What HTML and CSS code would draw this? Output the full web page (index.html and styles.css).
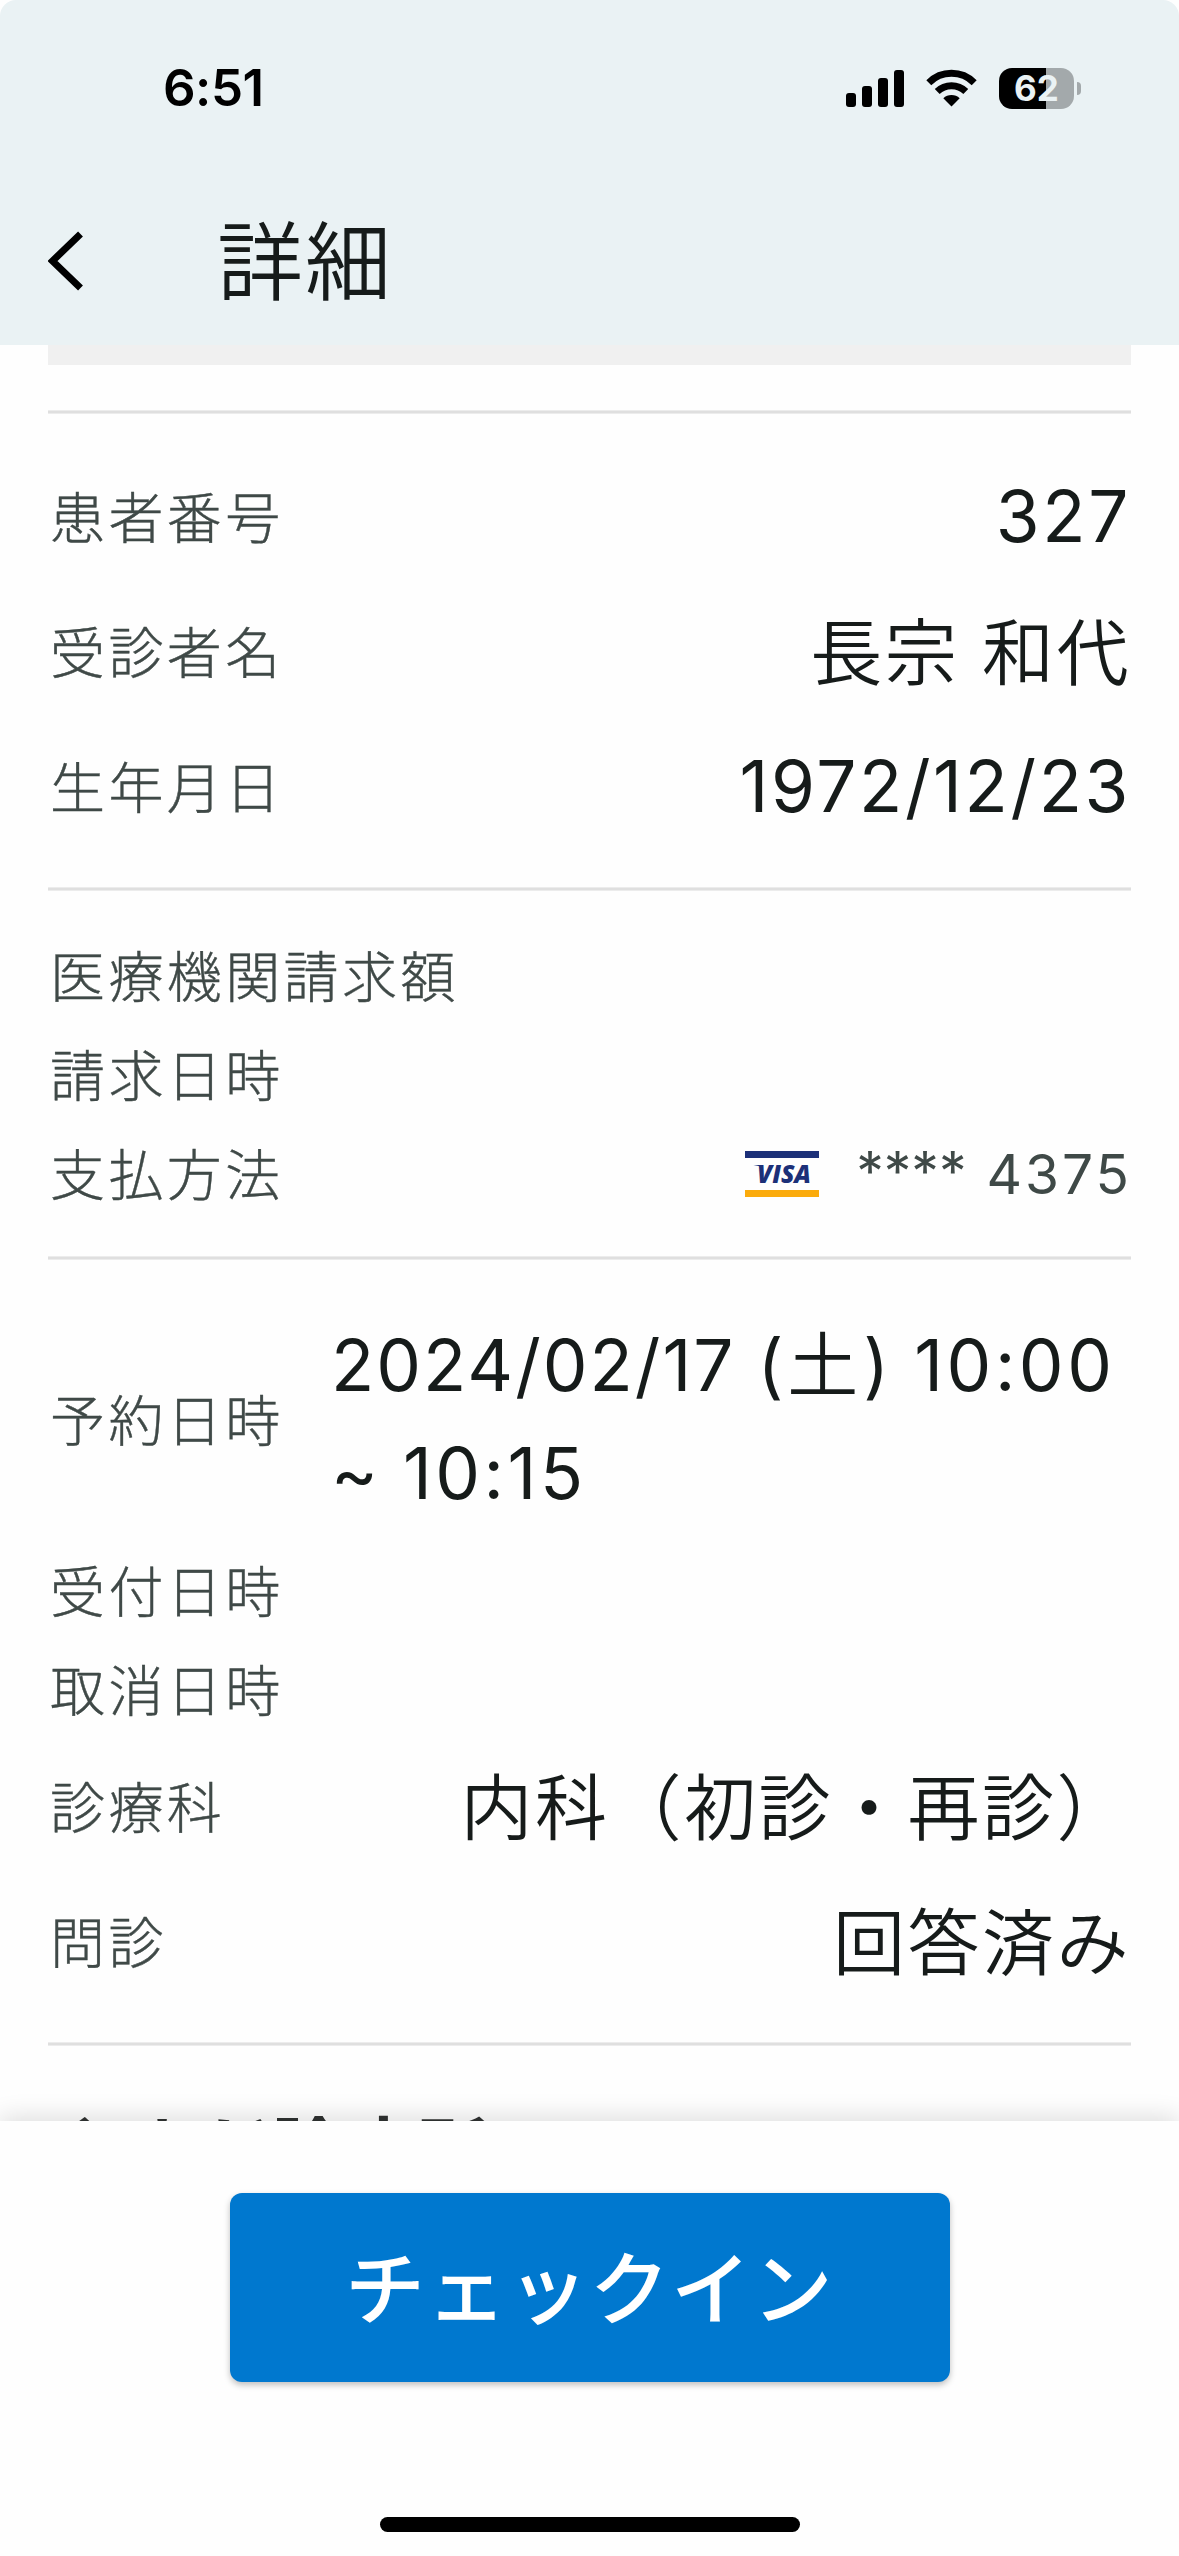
FILE: index.html
```html
<!DOCTYPE html>
<html lang="ja">
<head>
  <meta charset="UTF-8" />
  <meta name="viewport" content="width=device-width, initial-scale=1.0"/>
  <title>詳細</title>
  <link rel="stylesheet" href="styles.css">
</head>
<body>
  <header class="header">
    <div class="status-bar">
      <span class="time">6:51</span>
      <div class="status-icons">
        <svg class="signal" width="58" height="37" viewBox="0 0 58 37">
          <rect x="0" y="23" width="10" height="14" rx="3"/>
          <rect x="16" y="16" width="10" height="21" rx="3"/>
          <rect x="32" y="8" width="10" height="29" rx="3"/>
          <rect x="48" y="0" width="10" height="37" rx="3"/>
        </svg>
        <svg class="wifi" width="51" height="38" viewBox="0 0 51 38">
          <path d="M2.8 13.7A32 32 0 0 1 48.2 13.7" fill="none" stroke="#000" stroke-width="7"/>
          <path d="M11.2 22.6A20.5 20.5 0 0 1 39.8 22.6" fill="none" stroke="#000" stroke-width="7"/>
          <path d="M17.3 29.2A12 12 0 0 1 33.7 29.2L25.5 37.5Z"/>
        </svg>
        <div class="battery">
          <div class="battery-body">62</div>
          <div class="battery-cap"></div>
        </div>
      </div>
    </div>
    <div class="app-bar">
      <svg class="back" width="36" height="60" viewBox="0 0 36 60">
        <path d="M32.5 3L4.5 30L32.5 57" fill="none" stroke="#000" stroke-width="7"/>
      </svg>
      <h1>詳細</h1>
    </div>
  </header>

  <main class="content">
    <div class="block"></div>
    <hr>
    <section class="group">
      <div class="row">
        <span class="label">患者番号</span>
        <span class="value number">327</span>
      </div>
      <div class="row">
        <span class="label">受診者名</span>
        <span class="value">長宗 和代</span>
      </div>
      <div class="row">
        <span class="label">生年月日</span>
        <span class="value number">1972/12/23</span>
      </div>
    </section>
    <hr>
    <section class="group">
      <div class="row small">
        <span class="label">医療機関請求額</span>
      </div>
      <div class="row small">
        <span class="label">請求日時</span>
      </div>
      <div class="row small">
        <span class="label">支払方法</span>
        <div class="card">
          <svg class="visa" width="74" height="46" viewBox="0 0 74 46">
            <rect width="74" height="7" fill="#1c3078"/>
            <rect y="39" width="74" height="7" fill="#fbab0c"/>
            <path d="M8.5 14H17L18 17Q14 14.5 8.5 14Z" fill="#1c3078"/>
            <text x="12" y="32" textLength="54" lengthAdjust="spacingAndGlyphs">VISA</text>
          </svg>
          <span class="stars">****</span>
          <span>4375</span>
        </div>
      </div>
    </section>
    <hr>
    <section class="group schedule">
      <div class="row">
        <span class="label">予約日時</span>
        <span class="value number date">2024/02/17 (<span class="day">土</span>) <span class="hour">10:00</span><br>~ <span class="hour">10:15</span></span>
      </div>
      <div class="row small">
        <span class="label">受付日時</span>
      </div>
      <div class="row small">
        <span class="label">取消日時</span>
      </div>
      <div class="row">
        <span class="label">診療科</span>
        <span class="value">内科（初診・再診）</span>
      </div>
      <div class="row">
        <span class="label">問診</span>
        <span class="value">回答済み</span>
      </div>
    </section>
    <hr>
    <h2>やまだ診療所</h2>
  </main>

  <footer class="footer">
    <button type="button">チェックイン</button>
    <div class="home-indicator"></div>
  </footer>
</body>
</html>
```
FILE: styles.css
```css
* {
  margin: 0;
  padding: 0;
  box-sizing: border-box;
}

body {
  height: 2556px;
  display: flex;
  flex-direction: column;
  overflow: hidden;
  background: #fefefe;
  color: #161b1a;
  font-family: Inter, 'Noto Sans CJK JP', sans-serif;
}

.header {
  height: 345px;
  flex-shrink: 0;
  background: #eaf2f4;
  border-radius: 16px 16px 0 0;
}

.status-bar {
  height: 176px;
  padding: 0 98px 0 163px;
  display: flex;
  align-items: center;
  justify-content: space-between;
}

.time {
  font-size: 51px;
  font-weight: 600;
  line-height: 60px;
  letter-spacing: -0.5px;
  color: #000;
}

.status-icons {
  display: flex;
  align-items: center;
  gap: 22px;
}

.battery {
  display: flex;
  align-items: center;
  gap: 3px;
}

.battery-body {
  width: 75px;
  height: 41px;
  border-radius: 13px;
  background: linear-gradient(to right, #000 47px, #a3a9ab 47px);
  color: #eaf2f4;
  font-size: 35px;
  font-weight: 650;
  line-height: 41px;
  text-align: center;
}

.battery-cap {
  width: 4px;
  height: 13px;
  border-radius: 0 4px 4px 0;
  background: #a3a9ab;
}

.app-bar {
  height: 169px;
  padding-left: 48px;
  display: flex;
  align-items: center;
  gap: 133px;
}

h1 {
  padding-top: 5px;
  font-size: 86px;
  font-weight: 350;
  line-height: 120px;
  letter-spacing: 2px;
}

.content {
  flex: 1;
  min-height: 0;
  padding: 0 48px;
  overflow: hidden;
}

.block {
  height: 20px;
  margin-bottom: 45px;
  background: #f0f0f0;
}

hr {
  height: 4px;
  border: none;
  background: linear-gradient(#ececec 1px, #dfdfdf 1px, #dfdfdf 3px, #ececec 3px);
}

.group {
  padding: 35.5px 0 32.5px;
}

.schedule {
  padding-top: 38.5px;
}

.row {
  display: flex;
  align-items: center;
  justify-content: space-between;
  padding: 13.5px 0;
}

.row.small {
  height: 99px;
  padding: 9px 0;
}

.label {
  padding: 1px 0 0 2px;
  font-size: 55px;
  font-weight: 300;
  line-height: 80px;
  letter-spacing: 3.4px;
  color: #3f4947;
  -webkit-text-stroke: 0.4px #3f4947;
}

.value {
  margin: 1px 0 -1px;
  font-size: 72px;
  line-height: 108px;
  letter-spacing: 2.5px;
  font-weight: 350;
}

.number {
  margin: -1px 0 1px;
  font-size: 71px;
  font-weight: 400;
  letter-spacing: 2.6px;
}

.date {
  width: 800px;
  letter-spacing: 2px;
  white-space: nowrap;
}

.day {
  margin-left: 2px;
  font-weight: 350;
  letter-spacing: 5px;
}

.hour {
  margin-left: 1px;
  letter-spacing: 3.5px;
}

.card {
  margin-right: -1px;
  display: flex;
  align-items: center;
  font-size: 55px;
  font-weight: 380;
  line-height: 81px;
  letter-spacing: 3px;
  color: #3f4947;
}

.visa {
  margin-right: 37px;
}

.visa text {
  font-family: 'Open Sans', sans-serif;
  font-size: 25px;
  font-weight: 800;
  font-style: italic;
  letter-spacing: 0;
  fill: #1c3078;
}

.stars {
  margin-right: 20px;
  padding-bottom: 6px;
  line-height: 75px;
  letter-spacing: 0;
}

h2 {
  margin-top: 53px;
  padding-left: 3px;
  font-size: 71px;
  font-weight: 700;
  line-height: 102px;
  letter-spacing: 2.4px;
  color: #303332;
}

.footer {
  position: relative;
  height: 435px;
  flex-shrink: 0;
  padding: 72px 0 24px;
  display: flex;
  flex-direction: column;
  align-items: center;
  justify-content: space-between;
  background: #fefefe;
  box-shadow: 0 -3px 24px rgba(0, 0, 0, 0.14);
}

button {
  width: 720px;
  height: 189px;
  padding-bottom: 9px;
  border: none;
  border-radius: 12px;
  background: #0078cf;
  color: #fff;
  font-family: inherit;
  font-size: 80px;
  font-weight: 500;
  letter-spacing: 1.5px;
  box-shadow: 0 3px 6px rgba(0, 0, 0, 0.25);
}

.home-indicator {
  width: 420px;
  height: 15px;
  border-radius: 8px;
  background: #000;
}
```
